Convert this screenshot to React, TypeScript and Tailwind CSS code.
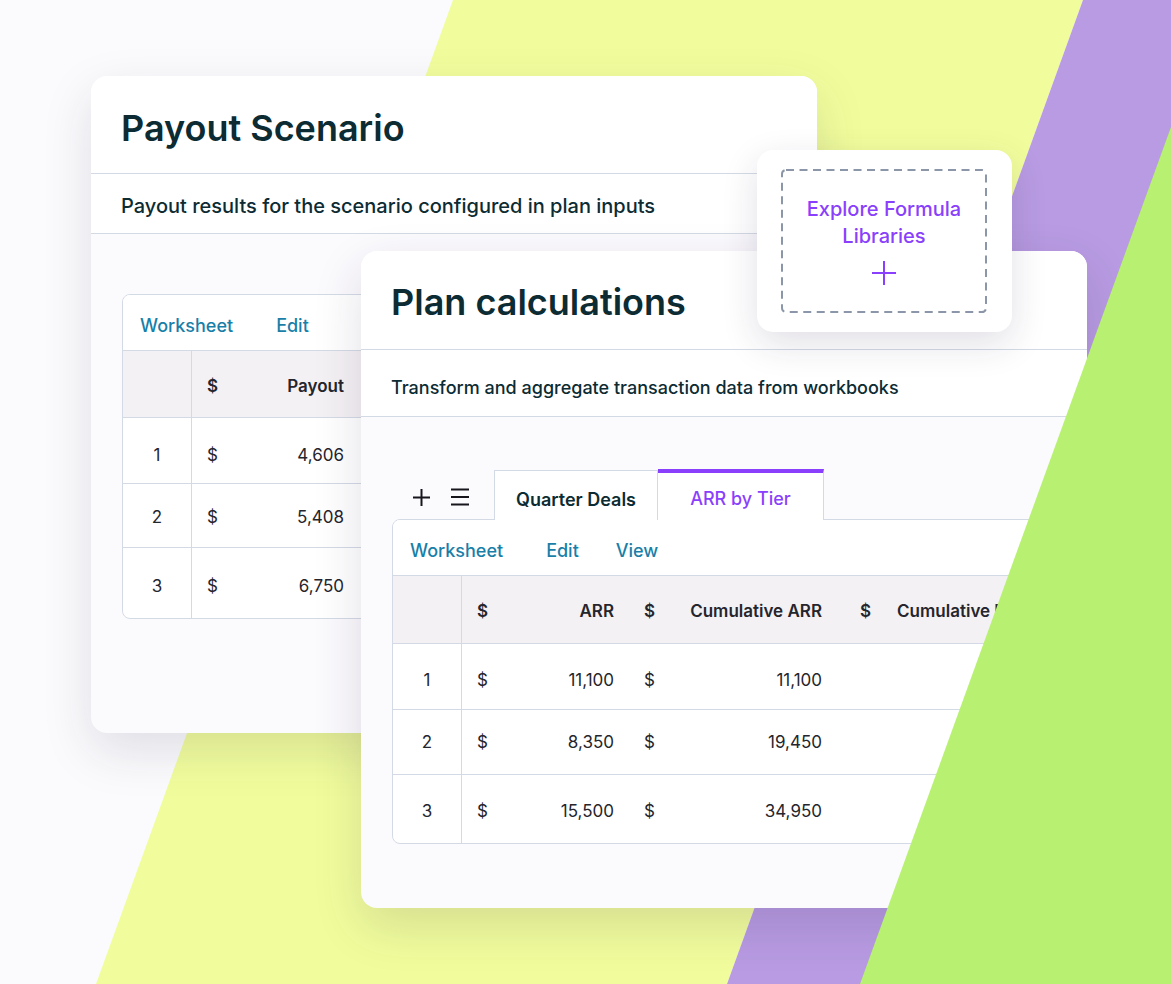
import React from "react";

const B = "border-[#d4dae5]";

function PlusIcon({ size = 17, stroke = 2 }: { size?: number; stroke?: number }) {
  return (
    <svg width={size} height={size} viewBox={`0 0 ${size} ${size}`} fill="none">
      <path d={`M${size / 2} 0V${size}M0 ${size / 2}H${size}`} stroke="currentColor" strokeWidth={stroke} />
    </svg>
  );
}

function MenuIcon() {
  return (
    <svg width="18" height="18" viewBox="0 0 18 18" fill="none">
      <path d="M0 1.5H18M0 9H18M0 16.5H18" stroke="currentColor" strokeWidth="1.8" />
    </svg>
  );
}

function Toolbar({ items }: { items: { label: string; ml: string }[] }) {
  return (
    <div className={`h-[56px] flex items-center pl-[17px] pt-[5px] border-b ${B} bg-white`}>
      {items.map((it) => (
        <span key={it.label} className={`${it.ml} text-[18px] font-medium text-[#197fa8]`}>
          {it.label}
        </span>
      ))}
    </div>
  );
}

function PayoutCard() {
  const rows = [
    { n: "1", v: "4,606", h: "h-[66px]", p: "pt-[10px]" },
    { n: "2", v: "5,408", h: "h-[64px]", p: "pt-[4px]" },
    { n: "3", v: "6,750", h: "h-[70px]", p: "pt-[8px]" },
  ];
  return (
    <div className="absolute left-[91px] top-[76px] w-[726px] h-[657px] rounded-2xl bg-[#fbfafd] overflow-hidden shadow-[0_18px_50px_rgba(40,30,70,0.13)] flex flex-col">
      <div className={`h-[98px] shrink-0 bg-white border-b ${B} flex items-center pl-[30px] pt-[6px]`}>
        <h1 className="text-[36px] leading-none font-semibold text-[#0c2b33]">Payout Scenario</h1>
      </div>
      <div className={`h-[60px] shrink-0 bg-white border-b ${B} flex items-center pl-[30px] pt-[4px]`}>
        <p className="text-[20px] font-medium text-[#0c2b33]">Payout results for the scenario configured in plan inputs</p>
      </div>
      <div className="pt-[60px] pl-[31px]">
        <div className={`w-[664px] rounded-lg border ${B} bg-white overflow-hidden`}>
          <Toolbar
            items={[
              { label: "Worksheet", ml: "" },
              { label: "Edit", ml: "ml-[43px]" },
            ]}
          />
          <div className={`flex h-[67px] bg-[#f4f1f4] border-b ${B} text-[17px] font-semibold text-[#25252d]`}>
            <div className={`w-[69px] shrink-0 border-r ${B}`} />
            <div className="w-[167px] shrink-0 flex items-center justify-between pl-[15px] pr-[15px] pt-[5px]">
              <span>$</span>
              <span>Payout</span>
            </div>
            <div className="w-[216px] shrink-0" />
          </div>
          {rows.map((r, i) => (
            <div
              key={r.n}
              className={`flex ${r.h} ${i < rows.length - 1 ? `border-b ${B}` : ""} text-[17px] text-[#25252d]`}
            >
              <div className={`w-[69px] shrink-0 border-r ${B} flex items-center justify-center ${r.p}`}>{r.n}</div>
              <div className={`w-[167px] shrink-0 flex items-center justify-between pl-[15px] pr-[15px] ${r.p}`}>
                <span>$</span>
                <span>{r.v}</span>
              </div>
              <div className="w-[216px] shrink-0" />
            </div>
          ))}
        </div>
      </div>
    </div>
  );
}

function PlanCard() {
  const rows = [
    { n: "1", a: "11,100", b: "11,100", h: "h-[66px]", p: "pt-[8px]" },
    { n: "2", a: "8,350", b: "19,450", h: "h-[65px]", p: "pt-[2px]" },
    { n: "3", a: "15,500", b: "34,950", h: "h-[68px]", p: "pt-[6px]" },
  ];
  return (
    <div className="absolute left-[361px] top-[251px] w-[726px] h-[657px] rounded-2xl bg-[#fbfafd] overflow-hidden shadow-[0_18px_50px_rgba(40,30,70,0.14)] flex flex-col">
      <div className={`h-[99px] shrink-0 bg-white border-b ${B} flex items-center pl-[30px] pt-[4px]`}>
        <h2 className="text-[36px] leading-none font-semibold text-[#0c2b33]">Plan calculations</h2>
      </div>
      <div className={`h-[67px] shrink-0 bg-white border-b ${B} flex items-center pl-[30px] pt-[8px]`}>
        <p className="text-[18px] font-medium text-[#0c2b33]">Transform and aggregate transaction data from workbooks</p>
      </div>
      <div className="pt-[53px] pl-[31px]">
        <div className="flex items-end h-[49px]">
          <div className="w-[102px] h-full flex items-center text-[#16161c]">
            <span className="ml-[21px] mt-[5px] flex">
              <PlusIcon />
            </span>
            <span className="ml-[21px] mt-[5px] flex">
              <MenuIcon />
            </span>
          </div>
          <div className={`relative z-10 w-[164px] h-[50px] -mb-px pt-[7px] bg-white border border-b-0 ${B} flex items-center justify-center text-[18px] font-semibold text-[#0c2b33]`}>
            Quarter Deals
          </div>
          <div className={`relative z-10 w-[166px] h-[51px] -mb-px pt-[4px] bg-white border-t-4 border-t-[#8a3ffc] border-r ${B} flex items-center justify-center text-[18px] font-medium text-[#8a3ffc]`}>
            ARR by Tier
          </div>
        </div>
        <div className={`w-[664px] rounded-lg border ${B} bg-white overflow-hidden`}>
          <Toolbar
            items={[
              { label: "Worksheet", ml: "" },
              { label: "Edit", ml: "ml-[43px]" },
              { label: "View", ml: "ml-[37px]" },
            ]}
          />
          <div className={`flex h-[68px] bg-[#f4f1f4] border-b ${B} text-[17px] font-semibold text-[#25252d]`}>
            <div className={`w-[69px] shrink-0 border-r ${B}`} />
            <div className="w-[167px] shrink-0 flex items-center justify-between pl-[15px] pr-[15px] pt-[4px]">
              <span>$</span>
              <span>ARR</span>
            </div>
            <div className="w-[216px] shrink-0 flex items-center justify-between pl-[15px] pr-[23px] pt-[4px]">
              <span>$</span>
              <span>Cumulative ARR</span>
            </div>
            <div className="flex items-center pl-[15px] pt-[4px] whitespace-nowrap">
              <span>$</span>
              <span className="ml-[26px]">Cumulative Payout</span>
            </div>
          </div>
          {rows.map((r, i) => (
            <div
              key={r.n}
              className={`flex ${r.h} ${i < rows.length - 1 ? `border-b ${B}` : ""} text-[17px] text-[#25252d]`}
            >
              <div className={`w-[69px] shrink-0 border-r ${B} flex items-center justify-center ${r.p}`}>{r.n}</div>
              <div className={`w-[167px] shrink-0 flex items-center justify-between pl-[15px] pr-[15px] ${r.p}`}>
                <span>$</span>
                <span>{r.a}</span>
              </div>
              <div className={`w-[216px] shrink-0 flex items-center justify-between pl-[15px] pr-[23px] ${r.p}`}>
                <span>$</span>
                <span>{r.b}</span>
              </div>
            </div>
          ))}
        </div>
      </div>
    </div>
  );
}

function FormulaPopup() {
  return (
    <div className="absolute left-[757px] top-[150px] w-[255px] h-[182px] rounded-2xl bg-white shadow-[0_12px_36px_rgba(40,30,70,0.14)] pt-[19px] pl-[24px]">
      <div className="relative w-[206px] h-[144px] flex flex-col items-center pt-[27px] text-[#8a3ffc]">
        <svg className="absolute inset-0" width="206" height="144" viewBox="0 0 206 144" fill="none">
          <rect x="1" y="1" width="204" height="142" rx="4" stroke="#8b97a8" strokeWidth="2" strokeDasharray="8 5.5" />
        </svg>
        <p className="text-[20px] leading-[27px] font-medium text-center">
          Explore Formula
          <br />
          Libraries
        </p>
        <span className="mt-[11px] flex">
          <PlusIcon size={24} stroke={2} />
        </span>
      </div>
    </div>
  );
}

export default function App() {
  return (
    <div className="relative w-[1171px] h-[984px] overflow-hidden bg-[#fbfbfd] font-['Inter','Noto_Sans',sans-serif]">
      <svg className="absolute inset-0" width="1171" height="984" viewBox="0 0 1171 984">
        <polygon points="453,0 1083,0 727,984 96,984" fill="#f1fd9c" />
        <polygon points="1083,0 1171,0 1171,984 727,984" fill="#b89be2" />
      </svg>
      <PayoutCard />
      <PlanCard />
      <svg className="absolute inset-0 pointer-events-none" width="1171" height="984" viewBox="0 0 1171 984">
        <polygon points="1171,127 1171,984 860,984" fill="#b8f072" />
      </svg>
      <FormulaPopup />
    </div>
  );
}
